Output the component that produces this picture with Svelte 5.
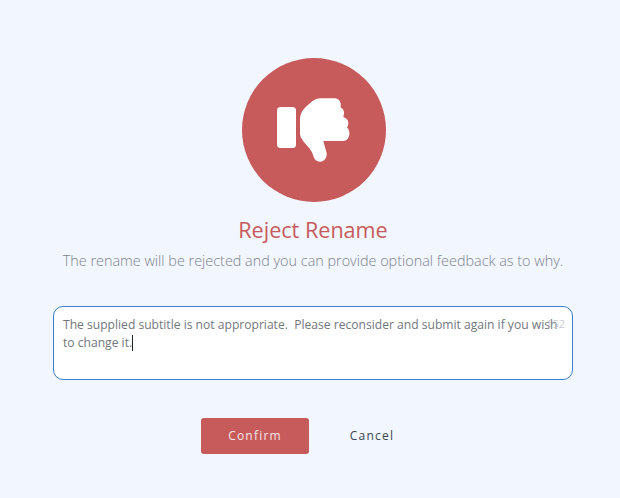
<script lang="ts">
	let feedback = 'The supplied subtitle is not appropriate.  Please reconsider and submit again if you wish to change it.';
	let remaining = 152;
</script>

<div class="page">
	<div class="badge">
		<svg width="76" height="66" viewBox="0 0 76 66" fill="#fff" aria-hidden="true">
			<rect x="1" y="10" width="19" height="41" rx="3.5" />
			<path d="M24 23C24 16 27 12 34 6.300C37 3.500 40 1.300 44 1.300H59C62 1.300 64 3.500 64.700 6.500L64.700 10.500C67 11.500 68.300 14 68 16C67.800 18 67.600 19 67.300 20C70.500 21 72.500 23.500 72.300 26C72.200 28 71.800 29.500 71 30.500C72.800 32 73.500 34 73.400 36.500C73.300 40.500 71 44 67 44H47.300L50.500 55.500C51.500 60 48.500 64.700 44 64.700C40.500 64.700 38.500 62.500 37.500 59.500C36.500 56 35 53.500 33.300 51.300C30 47.500 27.500 45 25.700 41.800C24.500 40 24 38 24 36Z" />
		</svg>
	</div>

	<h1>Reject Rename</h1>
	<p class="intro">The rename will be rejected and you can provide optional feedback as to why.</p>

	<div class="field" role="textbox" aria-multiline="true" tabindex="-1">
		<span class="value">{feedback}</span><span class="caret"></span>
		<span class="count">{remaining}</span>
	</div>

	<div class="actions">
		<button class="confirm">Confirm</button>
		<button class="cancel">Cancel</button>
	</div>
</div>

<style>
	:global(body) {
		background: #f1f6ff;
	}

	.page {
		height: 498px;
		box-sizing: border-box;
		padding: 58px 0 0 6px;
		display: flex;
		flex-direction: column;
		align-items: center;
		font-family: 'Open Sans', sans-serif;
	}

	.badge {
		width: 144px;
		height: 144px;
		margin-left: 2px;
		border-radius: 50%;
		background: #c75b5b;
		display: flex;
		align-items: center;
		justify-content: center;
		flex: none;
	}

	h1 {
		margin: 13px 0 0;
		font-size: 21.6px;
		line-height: 30px;
		font-weight: 400;
		color: #c75b5b;
	}

	.intro {
		margin: 6px 0 0;
		font-size: 14.4px;
		line-height: 20px;
		font-weight: 300;
		color: #7d828b;
	}

	.field {
		position: relative;
		box-sizing: border-box;
		width: 520px;
		height: 74px;
		margin-top: 35px;
		padding: 9px 9px;
		background: #fff;
		border: 1px solid #3a7fd5;
		border-radius: 10px;
		font-size: 12.1px;
		line-height: 18px;
		color: #72777e;
		white-space: pre-wrap;
	}

	.caret {
		display: inline-block;
		width: 1px;
		height: 16px;
		background: #222;
		vertical-align: -4px;
	}

	.count {
		position: absolute;
		top: 9px;
		right: 7px;
		font-size: 11px;
		line-height: 16px;
		color: #c9ccd1;
	}

	.actions {
		display: flex;
		align-items: center;
		gap: 8px;
		margin-top: 38px;
	}

	button {
		font-family: inherit;
		font-size: 12px;
		letter-spacing: 1.2px;
		border: none;
		border-radius: 3px;
		width: 108px;
		height: 36px;
		padding: 0 0 2px;
	}

	.confirm {
		background: #c75b5b;
		color: #f8e6e6;
	}

	.cancel {
		background: transparent;
		color: #3c4550;
		padding-left: 2px;
	}
</style>
